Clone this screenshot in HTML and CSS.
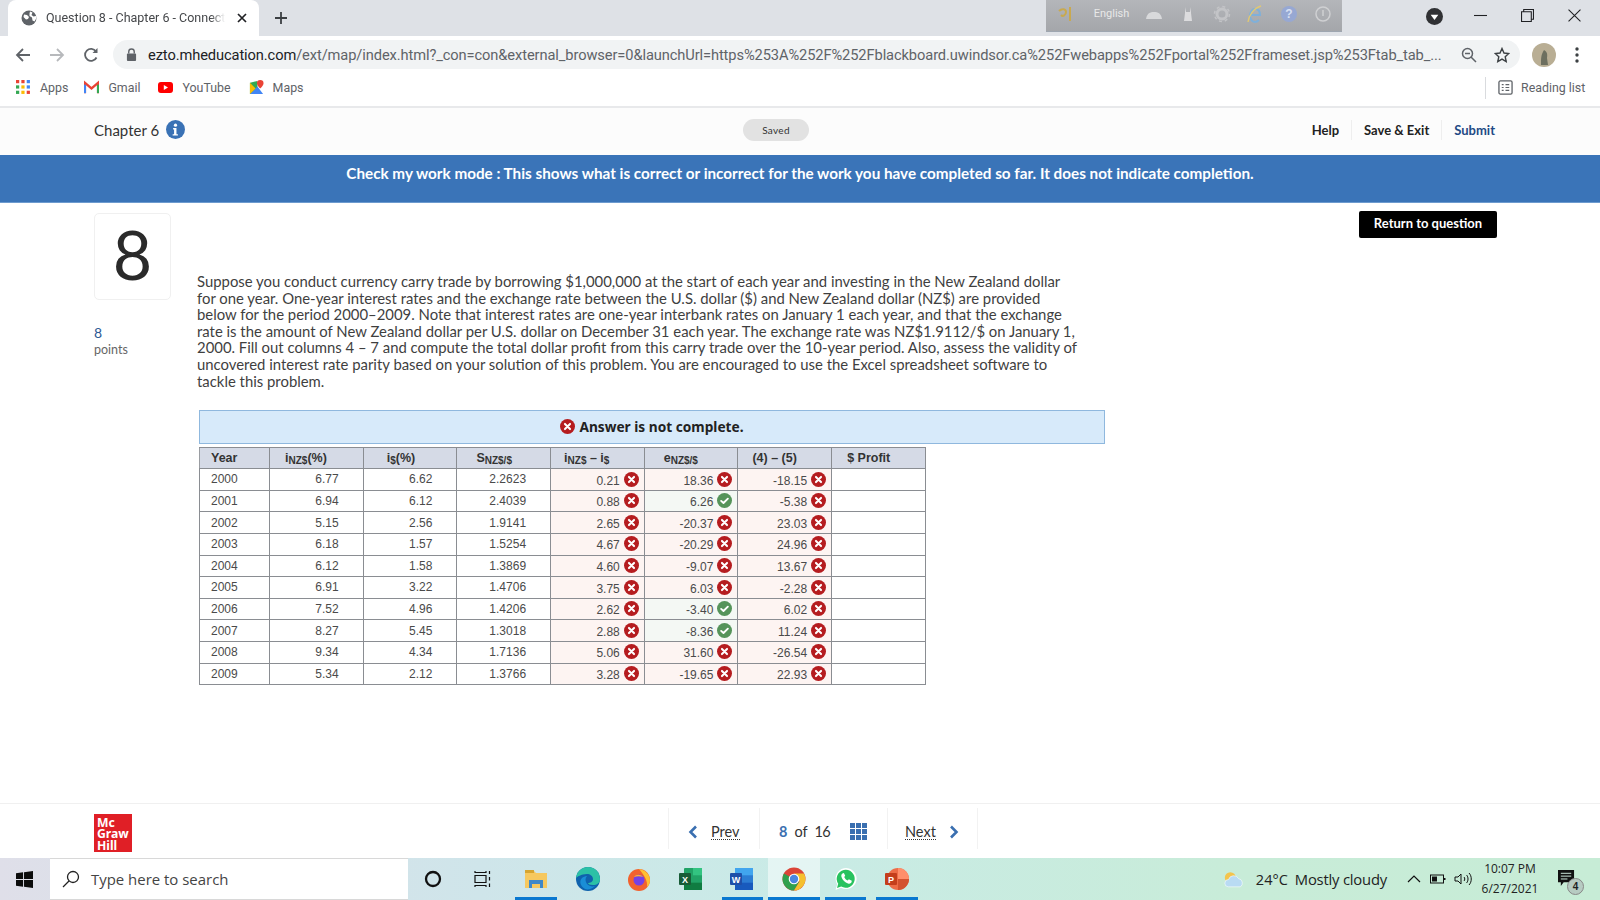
FILE: index.html
```html
<!DOCTYPE html>
<html lang="en">
<head>
<meta charset="utf-8">
<title>Question 8 - Chapter 6 - Connect</title>
<link rel="stylesheet" href="styles.css">
</head>
<body>
<svg class="defs" width="0" height="0" aria-hidden="true">
  <symbol id="bad" viewBox="0 0 16 16"><circle cx="8" cy="8" r="8" fill="#b51c1f"/><path d="M5.3 5.3l5.4 5.4M10.7 5.3l-5.4 5.4" stroke="#fff" stroke-width="2.2" stroke-linecap="round"/></symbol>
  <symbol id="good" viewBox="0 0 16 16"><circle cx="8" cy="8" r="8" fill="#55945a"/><path d="M4.4 8.4l2.5 2.3 4.7-4.7" stroke="#fff" stroke-width="2" fill="none" stroke-linecap="round" stroke-linejoin="round"/></symbol>
</svg>

<div class="tabstrip">
  <div class="tab">
    <svg class="tab-fav" viewBox="0 0 16 16"><circle cx="8" cy="8" r="7.5" fill="#5f6368"/><path d="M3 4.5l3 .5 2 2-1 2-2 .5-2.500-2.500zM9 1.500l2.500 1-1 2.500 2 1.500 2.500-.5.5 2-2 3.500-2-1-.5-3-2.500-1.500 0-2.500z" fill="#fff"/></svg>
    <span class="tab-title">Question 8 - Chapter 6 - Connect</span>
    <svg class="tab-x" viewBox="0 0 10 10"><path d="M1 1l8 8M9 1l-8 8" stroke="#202124" stroke-width="1.700"/></svg>
  </div>
  <svg class="tab-plus" viewBox="0 0 12 12"><path d="M6 0v12M0 6h12" stroke="#3c4043" stroke-width="1.800"/></svg>
  <div class="langbar">
    <svg class="lb-i lb-a" viewBox="0 0 18 18"><path d="M2 6c3-3 7-2 7 1s-3 5-5 3M13 2v14" stroke="#c9a94f" stroke-width="2" fill="none"/></svg>
    <span class="lb-txt">English</span>
    <svg class="lb-i" viewBox="0 0 18 18"><path d="M1 14c1-6 4-7 8-7s7 1 8 7z" fill="#d8d9db"/></svg>
    <svg class="lb-i" viewBox="0 0 18 18"><path d="M6 2l1 5h4l1-5v6l1 8H5l1-8z" fill="#dcdcde"/></svg>
    <svg class="lb-i" viewBox="0 0 18 18"><circle cx="9" cy="9" r="5" fill="none" stroke="#c3c4c7" stroke-width="3"/><circle cx="9" cy="9" r="7.500" fill="none" stroke="#c3c4c7" stroke-width="1.500" stroke-dasharray="3 2.900"/></svg>
    <svg class="lb-i" viewBox="0 0 18 18"><path d="M4 10h10c0-4-2-6-5-6s-5 3-5 7 3 6 5 6 3-1 4-2" fill="none" stroke="#7fb0da" stroke-width="2"/><path d="M2 17C3 10 8 3 15 1" fill="none" stroke="#e0c873" stroke-width="1.400"/></svg>
    <svg class="lb-i" viewBox="0 0 18 18"><circle cx="9" cy="9" r="8" fill="#97a8d3"/><text x="9" y="13" text-anchor="middle" class="lb-q">?</text></svg>
    <svg class="lb-i" viewBox="0 0 18 18"><circle cx="9" cy="9" r="7" fill="none" stroke="#cfd0d2" stroke-width="1.500"/><path d="M9 5v6" stroke="#cfd0d2" stroke-width="1.500"/></svg>
  </div>
  <div class="profile-dot"><svg viewBox="0 0 20 20"><circle cx="10" cy="10" r="10" fill="#303134"/><path d="M5.500 8h9L10 14z" fill="#fff"/></svg></div>
  <div class="winbtns">
    <svg viewBox="0 0 12 12"><path d="M0 6h12" stroke="#202124"/></svg>
    <svg viewBox="0 0 12 12"><path d="M2.500 2.500V.5h9v9h-2M.5 2.500h9v9h-9z" stroke="#202124" fill="none"/></svg>
    <svg viewBox="0 0 12 12"><path d="M.5.5l11 11M11.500.5l-11 11" stroke="#202124"/></svg>
  </div>
</div>

<div class="toolbar">
  <svg class="nav" viewBox="0 0 16 16"><path d="M15 8H2M8 2L2 8l6 6" stroke="#5f6368" stroke-width="1.800" fill="none"/></svg>
  <svg class="nav" viewBox="0 0 16 16"><path d="M1 8h13M8 2l6 6-6 6" stroke="#b7b9bc" stroke-width="1.800" fill="none"/></svg>
  <svg class="nav" viewBox="0 0 16 16"><path d="M13.500 10.500A6 6 0 1 1 13 4.500" stroke="#5f6368" stroke-width="1.800" fill="none"/><path d="M14.500 1v5h-5z" fill="#5f6368"/></svg>
  <div class="omnibox">
    <svg class="lock" viewBox="0 0 12 14"><rect x="1" y="6" width="10" height="8" rx="1" fill="#5f6368"/><path d="M3 6V4a3 3 0 0 1 6 0v2" stroke="#5f6368" stroke-width="1.500" fill="none"/></svg>
    <span class="url"><b>ezto.mheducation.com</b>/ext/map/index.html?_con=con&amp;external_browser=0&amp;launchUrl=https%253A%252F%252Fblackboard.uwindsor.ca%252Fwebapps%252Fportal%252Fframeset.jsp%253Ftab_tab_...</span>
    <svg class="omni-i" viewBox="0 0 16 16"><circle cx="6.500" cy="6.500" r="5" stroke="#5f6368" stroke-width="1.500" fill="none"/><path d="M10 10l5 5M4 6.500h5" stroke="#5f6368" stroke-width="1.500"/></svg>
    <svg class="omni-i" viewBox="0 0 16 16"><path d="M8 1.500l2 4.500 4.800.5-3.600 3.200 1 4.800L8 12.100l-4.200 2.400 1-4.800L1.200 6.500 6 6z" stroke="#3c4043" stroke-width="1.400" fill="none"/></svg>
  </div>
  <svg class="avatar" viewBox="0 0 24 24"><circle cx="12" cy="12" r="12" fill="#b9ae94"/><path d="M9 22c0-7 0-10 3-15 2 1 4 3 3 8l1 7z" fill="#6d6f5f"/></svg>
  <svg class="kebab" viewBox="0 0 4 16"><circle cx="2" cy="2" r="1.700" fill="#3c4043"/><circle cx="2" cy="8" r="1.700" fill="#3c4043"/><circle cx="2" cy="14" r="1.700" fill="#3c4043"/></svg>
</div>

<div class="bookmarks">
  <div class="bm">
    <svg viewBox="0 0 14 14"><g><rect x="0" y="0" width="3" height="3" fill="#ea4335"/><rect x="5" y="0" width="3" height="3" fill="#ea4335"/><rect x="10" y="0" width="3" height="3" fill="#4285f4"/><rect x="0" y="5" width="3" height="3" fill="#34a853"/><rect x="5" y="5" width="3" height="3" fill="#fbbc04"/><rect x="10" y="5" width="3" height="3" fill="#4285f4"/><rect x="0" y="10" width="3" height="3" fill="#34a853"/><rect x="5" y="10" width="3" height="3" fill="#fbbc04"/><rect x="10" y="10" width="3" height="3" fill="#ea4335"/></g></svg>
    <span>Apps</span>
  </div>
  <div class="bm">
    <svg viewBox="0 0 16 12"><path d="M1 12V1l7 6 7-6v11" fill="none" stroke="#ea4335" stroke-width="2.400"/><path d="M1 12V3" stroke="#4285f4" stroke-width="2.400"/><path d="M15 12V3" stroke="#34a853" stroke-width="2.400"/></svg>
    <span>Gmail</span>
  </div>
  <div class="bm">
    <svg viewBox="0 0 18 13"><rect width="18" height="13" rx="3.500" fill="#f00"/><path d="M7 3.500v6l5-3z" fill="#fff"/></svg>
    <span>YouTube</span>
  </div>
  <div class="bm">
    <svg viewBox="0 0 16 16"><path d="M1 3l8-2v14l-8 0z" fill="#34a853"/><path d="M1 15L9 7l6 8z" fill="#4285f4"/><path d="M1 3l6 6-6 6z" fill="#fbbc04"/><path d="M12 0a3.500 3.500 0 0 1 3.500 3.500C15.500 6 12 9 12 9S8.500 6 8.500 3.500A3.500 3.500 0 0 1 12 0z" fill="#ea4335"/></svg>
    <span>Maps</span>
  </div>
  <div class="reading">
    <svg viewBox="0 0 16 16"><rect x="1" y="1" width="14" height="14" rx="1.500" fill="none" stroke="#5f6368" stroke-width="1.400"/><path d="M4 5h2M4 8h2M4 11h2M8 5h4M8 8h4M8 11h4" stroke="#5f6368" stroke-width="1.300"/></svg>
    <span>Reading list</span>
  </div>
</div>

<header class="apphead">
  <div class="chapter">
    <span>Chapter 6</span>
    <svg class="info" viewBox="0 0 20 20"><circle cx="10" cy="10" r="10" fill="#3a72b5"/><circle cx="10" cy="5.500" r="1.700" fill="#fff"/><path d="M7.500 8.500h3.500v6.500h1.500v1.300h-5.500V15h1.500v-5H7.500z" fill="#fff"/></svg>
  </div>
  <div class="saved">Saved</div>
  <nav class="headlinks">
    <a class="hl">Help</a>
    <a class="hl hl-sep">Save &amp; Exit</a>
    <a class="hl hl-sep hl-submit">Submit</a>
  </nav>
</header>

<div class="banner">Check my work mode : This shows what is correct or incorrect for the work you have completed so far. It does not indicate completion.</div>

<main class="main">
  <aside class="side">
    <div class="qnum">8</div>
    <div class="pts">8</div>
    <div class="ptslabel">points</div>
  </aside>
  <section class="content">
    <p class="question">Suppose you conduct currency carry trade by borrowing $1,000,000 at the start of each year and investing in the New Zealand dollar<br>for one year. One-year interest rates and the exchange rate between the U.S. dollar ($) and New Zealand dollar (NZ$) are provided<br>below for the period 2000–2009. Note that interest rates are one-year interbank rates on January 1 each year, and that the exchange<br>rate is the amount of New Zealand dollar per U.S. dollar on December 31 each year. The exchange rate was NZ$1.9112/$ on January 1,<br>2000. Fill out columns 4 – 7 and compute the total dollar profit from this carry trade over the 10-year period. Also, assess the validity of<br>uncovered interest rate parity based on your solution of this problem. You are encouraged to use the Excel spreadsheet software to<br>tackle this problem.</p>
    <div class="notice"><svg class="st st-lg"><use href="#bad"/></svg><span>Answer is not complete.</span></div>
    <table class="grid">
      <colgroup><col class="c1"><col class="c2"><col class="c2"><col class="c2"><col class="c2"><col class="c2"><col class="c2"><col class="c2"></colgroup>
      <thead>
        <tr>
          <th class="p-year">Year</th>
          <th class="p-a">i<sub>NZ$</sub>(%)</th>
          <th class="p-b">i<sub>$</sub>(%)</th>
          <th class="p-c">S<sub>NZ$/$</sub></th>
          <th class="p-d">i<sub>NZ$</sub> – i<sub>$</sub></th>
          <th class="p-c">e<sub>NZ$/$</sub></th>
          <th class="p-e">(4) – (5)</th>
          <th class="p-f">$ Profit</th>
        </tr>
      </thead>
      <tbody>
        <tr><td class="yr">2000</td><td>6.77</td><td>6.62</td><td>2.2623</td><td class="bad">0.21<svg class="st"><use href="#bad"/></svg></td><td class="bad">18.36<svg class="st"><use href="#bad"/></svg></td><td class="bad">-18.15<svg class="st"><use href="#bad"/></svg></td><td></td></tr>
        <tr><td class="yr">2001</td><td>6.94</td><td>6.12</td><td>2.4039</td><td class="bad">0.88<svg class="st"><use href="#bad"/></svg></td><td class="good">6.26<svg class="st"><use href="#good"/></svg></td><td class="bad">-5.38<svg class="st"><use href="#bad"/></svg></td><td></td></tr>
        <tr><td class="yr">2002</td><td>5.15</td><td>2.56</td><td>1.9141</td><td class="bad">2.65<svg class="st"><use href="#bad"/></svg></td><td class="bad">-20.37<svg class="st"><use href="#bad"/></svg></td><td class="bad">23.03<svg class="st"><use href="#bad"/></svg></td><td></td></tr>
        <tr><td class="yr">2003</td><td>6.18</td><td>1.57</td><td>1.5254</td><td class="bad">4.67<svg class="st"><use href="#bad"/></svg></td><td class="bad">-20.29<svg class="st"><use href="#bad"/></svg></td><td class="bad">24.96<svg class="st"><use href="#bad"/></svg></td><td></td></tr>
        <tr><td class="yr">2004</td><td>6.12</td><td>1.58</td><td>1.3869</td><td class="bad">4.60<svg class="st"><use href="#bad"/></svg></td><td class="bad">-9.07<svg class="st"><use href="#bad"/></svg></td><td class="bad">13.67<svg class="st"><use href="#bad"/></svg></td><td></td></tr>
        <tr><td class="yr">2005</td><td>6.91</td><td>3.22</td><td>1.4706</td><td class="bad">3.75<svg class="st"><use href="#bad"/></svg></td><td class="bad">6.03<svg class="st"><use href="#bad"/></svg></td><td class="bad">-2.28<svg class="st"><use href="#bad"/></svg></td><td></td></tr>
        <tr><td class="yr">2006</td><td>7.52</td><td>4.96</td><td>1.4206</td><td class="bad">2.62<svg class="st"><use href="#bad"/></svg></td><td class="good">-3.40<svg class="st"><use href="#good"/></svg></td><td class="bad">6.02<svg class="st"><use href="#bad"/></svg></td><td></td></tr>
        <tr><td class="yr">2007</td><td>8.27</td><td>5.45</td><td>1.3018</td><td class="bad">2.88<svg class="st"><use href="#bad"/></svg></td><td class="good">-8.36<svg class="st"><use href="#good"/></svg></td><td class="bad">11.24<svg class="st"><use href="#bad"/></svg></td><td></td></tr>
        <tr><td class="yr">2008</td><td>9.34</td><td>4.34</td><td>1.7136</td><td class="bad">5.06<svg class="st"><use href="#bad"/></svg></td><td class="bad">31.60<svg class="st"><use href="#bad"/></svg></td><td class="bad">-26.54<svg class="st"><use href="#bad"/></svg></td><td></td></tr>
        <tr><td class="yr">2009</td><td>5.34</td><td>2.12</td><td>1.3766</td><td class="bad">3.28<svg class="st"><use href="#bad"/></svg></td><td class="bad">-19.65<svg class="st"><use href="#bad"/></svg></td><td class="bad">22.93<svg class="st"><use href="#bad"/></svg></td><td></td></tr>
      </tbody>
    </table>
  </section>
  <div class="return-wrap"><button class="return">Return to question</button></div>
</main>

<footer class="appfoot">
  <div class="logo">Mc<br>Graw<br>Hill</div>
  <div class="pager">
    <div class="pg pg-prev">
      <svg class="chev" viewBox="0 0 10 14"><path d="M8 1.500L2.500 7 8 12.500" stroke="#3a6fb0" stroke-width="2.600" fill="none"/></svg>
      <span class="pglink">Prev</span>
    </div>
    <div class="pg pg-mid">
      <b class="cur">8</b><span class="of">of</span><span class="total">16</span>
      <svg class="gridi" viewBox="0 0 17 17"><g fill="#3a6fb0"><rect width="5" height="5"/><rect x="6" width="5" height="5"/><rect x="12" width="5" height="5"/><rect y="6" width="5" height="5"/><rect x="6" y="6" width="5" height="5"/><rect x="12" y="6" width="5" height="5"/><rect y="12" width="5" height="5"/><rect x="6" y="12" width="5" height="5"/><rect x="12" y="12" width="5" height="5"/></g></svg>
    </div>
    <div class="pg pg-next">
      <span class="pglink">Next</span>
      <svg class="chev" viewBox="0 0 10 14"><path d="M2 1.500L7.500 7 2 12.500" stroke="#3a6fb0" stroke-width="2.600" fill="none"/></svg>
    </div>
  </div>
</footer>

<div class="taskbar">
  <div class="start"><svg viewBox="0 0 18 18"><path d="M0 2.500L7.500 1.400V8.500H0zM8.500 1.300L18 0V8.500H8.500zM0 9.500h7.500v7.100L0 15.500zM8.500 9.500H18V18L8.500 16.700z" fill="#0b0b0b"/></svg></div>
  <div class="search">
    <svg viewBox="0 0 18 18"><circle cx="11" cy="7" r="5.500" fill="none" stroke="#222" stroke-width="1.300"/><path d="M7 11l-6 6" stroke="#222" stroke-width="1.300"/></svg>
    <span>Type here to search</span>
  </div>
  <div class="tb-apps">
    <div class="tb"><svg viewBox="0 0 18 18"><circle cx="9" cy="9" r="7" fill="none" stroke="#111" stroke-width="2.300"/></svg></div>
    <div class="tb tb-view"><svg viewBox="0 0 18 18"><path d="M1 1v1.500h11V1M1 5.500h11v7H1zM1 17v-1.500h11V17M15.500 1v3M15.500 7v3.500M15.500 13.500V17" stroke="#111" stroke-width="1.200" fill="none"/></svg></div>
    <div class="tb on"><svg viewBox="0 0 24 24"><path d="M1 4h9l2 2h11v15H1z" fill="#f6c85f"/><rect x="1" y="3" width="9" height="3" fill="#d7a530"/><path d="M5 21v-8h14v8h-3v-4H8v4z" fill="#3f88c8"/></svg></div>
    <div class="tb"><svg viewBox="0 0 24 24"><circle cx="12" cy="12" r="12" fill="#0f62ad"/><path d="M0 11C1 4 6 0 12 0c7 0 12 5 12 12 0 4-3 6-7 6-3 0-5-1-5-2 2 0 5-1 5-4 0-3-3-5-6-5-6 0-10 3-11 4z" fill="#2cc1a6"/><path d="M9 22c-5-3-6-8-3-11 1-1 3-2 5-2-2 2-2 5 0 8 2 2 5 3 8 2-3 3-7 4-10 3z" fill="#1a8ed6"/></svg></div>
    <div class="tb"><svg viewBox="0 0 24 24"><circle cx="12" cy="13" r="11" fill="#f2622e"/><path d="M12 2c6 1 11 5 11 11 0 3-1 5-3 7 1-6-3-12-8-18z" fill="#ffc131"/><circle cx="12" cy="13" r="5.500" fill="#7542e5"/><path d="M7 10c2-3 7-3 9 0-3-1-6-1-9 0z" fill="#ffb02e"/></svg></div>
    <div class="tb"><svg viewBox="0 0 24 24"><rect x="5" y="1" width="18" height="22" rx="1" fill="#21a366"/><rect x="14" y="1" width="9" height="7.300" fill="#33c481"/><rect x="5" y="15.700" width="18" height="7.300" fill="#107c41"/><rect x="0" y="6" width="12" height="12" rx="1" fill="#185c37"/><text x="6" y="15.500" text-anchor="middle" class="app-l">X</text></svg></div>
    <div class="tb on"><svg viewBox="0 0 24 24"><rect x="5" y="1" width="18" height="22" rx="1" fill="#2b7cd3"/><rect x="5" y="1" width="18" height="7.300" fill="#41a5ee"/><rect x="5" y="15.700" width="18" height="7.300" fill="#185abd"/><rect x="0" y="6" width="12" height="12" rx="1" fill="#1e4fa8"/><text x="6" y="15.500" text-anchor="middle" class="app-l">W</text></svg></div>
    <div class="tb on active"><svg viewBox="0 0 24 24"><circle cx="12" cy="12" r="11.500" fill="#db4437"/><path d="M12 12L1.900 6.500A11.500 11.500 0 0 0 12 23.500l5-8.500z" fill="#2fa04d"/><path d="M12 6.500h10A11.500 11.500 0 0 1 12 23.500l5.500-9z" fill="#f5c02e"/><circle cx="12" cy="12" r="5.300" fill="#fff"/><circle cx="12" cy="12" r="4.200" fill="#4a86e0"/></svg></div>
    <div class="tb on"><svg viewBox="0 0 24 24"><path d="M1.500 23l1.700-5.800A10.500 10.500 0 1 1 7 20.800z" fill="#fff"/><path d="M3 21l1.200-4.200A9 9 0 1 1 7.200 19.600z" fill="#28c25f"/><path d="M8.500 6.500c-1 .5-1.500 2-1 3.500 1 3 3.500 5.500 6.500 6.500 1.500.5 3 0 3.500-1.200l.3-1.500-3-1.500-1 1.200c-1.500-.5-3-2-3.600-3.500l1-1.200-1.300-2.700z" fill="#fff"/></svg></div>
    <div class="tb on"><svg viewBox="0 0 24 24"><circle cx="13" cy="12" r="11" fill="#ed6c47"/><path d="M13 1a11 11 0 0 1 11 11H13z" fill="#ff8f6b"/><path d="M13 12h11a11 11 0 0 1-11 11z" fill="#d35230"/><rect x="0" y="6" width="12" height="12" rx="1" fill="#c43e1c"/><text x="6" y="15.500" text-anchor="middle" class="app-l">P</text></svg></div>
  </div>
  <div class="tray">
    <svg class="weather" viewBox="0 0 24 18"><circle cx="8" cy="7" r="6" fill="#f3c44d"/><path d="M6 17a4 4 0 0 1 0-8 6 6 0 0 1 11-1 5 5 0 0 1 2 9z" fill="#b9dbf3" stroke="#fff" stroke-width=".6"/></svg>
    <span class="temp">24°C</span>
    <span class="cond">Mostly cloudy</span>
    <svg class="tray-chev" viewBox="0 0 14 8"><path d="M1 7l6-6 6 6" stroke="#111" stroke-width="1.200" fill="none"/></svg>
    <svg class="tray-bat" viewBox="0 0 16 10"><rect x=".5" y="1" width="13" height="8" fill="none" stroke="#111"/><rect x="2" y="2.500" width="5" height="5" fill="#111"/><rect x="14" y="4" width="1.500" height="2" fill="#111"/></svg>
    <svg class="tray-vol" viewBox="0 0 18 14"><path d="M1 5h3l3-3v10L4 9H1z" fill="none" stroke="#111"/><path d="M10 5c1 1 1 3 0 4M12.500 3c2 2 2 6 0 8M15 1c3 3 3 9 0 12" fill="none" stroke="#111"/></svg>
    <div class="clock"><span>10:07 PM</span><span>6/27/2021</span></div>
    <div class="notif">
      <svg viewBox="0 0 18 18"><path d="M0 0h17v13H6l-3 4v-4H0z" fill="#111"/><path d="M3 3.500h11M3 6.500h11M3 9.500h7" stroke="#d4efe3"/></svg>
      <span class="badge">4</span>
    </div>
  </div>
</div>
</body>
</html>
```

FILE: styles.css
```css
* { box-sizing: border-box; }
html, body { margin: 0; height: 100%; }
body {
  width: 1600px; height: 900px; overflow: hidden;
  display: flex; flex-direction: column;
  font-family: "Noto Sans", "Liberation Sans", sans-serif;
  background: #fff; color: #333;
}
.defs { position: absolute; }

/* browser chrome */
.tabstrip { height: 36px; flex: none; background: #dee1e6; display: flex; align-items: flex-start; padding-left: 8px; }
.tab { width: 251px; height: 36px; background: #fff; border-radius: 8px 8px 0 0; display: flex; align-items: center; padding: 0 0 0 13px; overflow: hidden; flex: none; }
.tab-fav { width: 16px; height: 16px; flex: none; }
.tab-title { margin-left: 9px; width: 179px; flex: none; font-size: 12.5px; color: #45474a; white-space: nowrap; overflow: hidden; padding-bottom: 2px; -webkit-mask-image: linear-gradient(90deg, #000 92%, transparent); mask-image: linear-gradient(90deg, #000 92%, transparent); font-family: "Roboto", sans-serif; }
.tab-x { width: 10px; height: 10px; margin-left: 12px; flex: none; }
.tab-plus { width: 12px; height: 12px; margin: 12px 0 0 16px; flex: none; }
.langbar { margin-left: 759px; width: 296px; height: 32px; background: linear-gradient(#b4b6ba, #a4a6aa); border-bottom: 1px solid #9ea6b0; display: flex; align-items: center; padding: 0 10px 4px 11px; justify-content: space-between; flex: none; }
.lb-i { width: 18px; height: 18px; flex: none; }
.lb-txt { font-size: 11px; color: #e8e8e8; font-family: "Roboto", sans-serif; margin-left: 3px; }
.lb-q { font: bold 12px "Liberation Sans", sans-serif; fill: #d9e0f2; }
.profile-dot { margin: 8px 0 0 84px; width: 17px; height: 17px; flex: none; }
.profile-dot svg { display: block; width: 17px; height: 17px; }
.winbtns { margin: 9px 0 0 31px; display: flex; gap: 34px; flex: none; }
.winbtns svg { width: 13px; height: 13px; flex: none; }

.toolbar { height: 35px; flex: none; display: flex; align-items: center; padding: 2px 0 0 15px; background: #fff; }
.nav { width: 16px; height: 16px; margin-right: 18px; flex: none; }
.omnibox { width: 1407px; height: 29px; margin-left: -4px; border-radius: 15px; background: #f1f3f4; display: flex; align-items: center; padding-left: 13px; flex: none; }
.lock { width: 11px; height: 13px; flex: none; }
.url { margin-left: 11px; width: 1296px; flex: none; white-space: nowrap; overflow: hidden; font-family: "Roboto", sans-serif; font-size: 14.66px; color: #5f6368; letter-spacing: -.1px; }
.url b { font-weight: 400; color: #202124; }
.omni-i { width: 16px; height: 16px; margin-left: 17px; flex: none; }
.avatar { width: 24px; height: 24px; margin-left: 12px; flex: none; }
.kebab { width: 4px; height: 16px; margin-left: 19px; flex: none; }

.bookmarks { height: 37px; flex: none; border-bottom: 2px solid #e8e9eb; display: flex; align-items: center; padding: 0 0 2px 16px; background: #fff; font-family: "Roboto", sans-serif; font-size: 12.4px; color: #5f6368; }
.bm { display: flex; align-items: center; gap: 9px; margin-right: 18px; }
.bm:first-child { margin-right: 16px; }
.bm svg { width: 15px; height: 15px; flex: none; }
.reading { margin-left: auto; display: flex; align-items: center; width: 115px; height: 22px; border-left: 1px solid #d9dbde; padding-left: 12px; gap: 8px; }
.reading svg { width: 15px; height: 15px; }

/* app */
.apphead { height: 47px; flex: none; background: #fcfcfc; display: flex; align-items: center; padding: 0 105px 4px 94px; font-family: "Lato", sans-serif; }
.chapter { display: flex; align-items: center; gap: 7px; font-size: 15px; color: #333; width: 649px; flex: none; }
.info { width: 19px; height: 19px; }
.saved { width: 66px; height: 22px; border-radius: 11px; background: #e2e2e2; font-size: 10px; color: #333; display: flex; align-items: center; justify-content: center; letter-spacing: .3px; }
.headlinks { margin-left: auto; display: flex; align-items: center; font-size: 13px; font-weight: 700; color: #222; }
.hl-sep { margin-left: 12px; padding-left: 12px; border-left: 1px solid #eee; line-height: 20px; }
.hl-submit { color: #1f4a85; }

.banner { height: 48px; flex: none; background: #3a74b8; border-bottom: 1px solid #6d9bcf; color: #fff; font-family: "Lato", sans-serif; font-weight: 700; font-size: 15.25px; display: flex; align-items: center; justify-content: center; padding-bottom: 11px; }

.main { height: 600px; flex: none; display: flex; align-items: flex-start; padding-left: 94px; font-family: "Lato", sans-serif; }
.side { width: 77px; flex: none; padding-top: 10px; }
.qnum { height: 87px; border: 1px solid #f0f0f0; border-radius: 5px; font-size: 68px; font-weight: 400; color: #2a2a2a; display: flex; align-items: center; justify-content: center; line-height: 1; padding-bottom: 5px; }
.pts { margin-top: 24px; font-size: 14px; line-height: 17px; color: #2d5a94; }
.ptslabel { font-size: 12.5px; line-height: 17px; color: #666; }
.content { margin-left: 26px; width: 920px; flex: none; padding-top: 70px; }
.question { margin: 0; font-size: 14.88px; line-height: 16.6px; color: #3f3f3f; white-space: nowrap; }
.notice { margin: 21px 0 0 2px; width: 906px; height: 34px; background: #d7eafa; border: 1px solid #8fb8de; display: flex; align-items: center; justify-content: center; gap: 4px; font-family: "Noto Sans", sans-serif; font-weight: 700; font-size: 13.7px; color: #222; padding: 0 0 1px; }
.grid { margin: 3px 0 0 2px; width: 726px; border-collapse: collapse; table-layout: fixed; font-family: "Liberation Sans", sans-serif; font-size: 12px; color: #4a4a4a; }
.c1 { width: 70px; }
.c2 { width: 93.7px; }
.grid th { height: 21px; background: #d5dae6; border: 1px solid #8a8d92; border-left-color: #9a9da2; text-align: left; font-size: 12.5px; font-weight: 700; color: #333; padding: 0; white-space: nowrap; }
.grid sub { font-size: 10px; line-height: 0; vertical-align: -2px; }
.grid th.p-year { padding-left: 11px; }
.grid th.p-a { padding-left: 15px; }
.grid th.p-b { padding-left: 23px; }
.grid th.p-c { padding-left: 19px; }
.grid th.p-d { padding-left: 13px; }
.grid th.p-e { padding-left: 14px; }
.grid th.p-f { padding-left: 15px; }
.grid td { height: 21.6px; border: 1px solid #8a8d92; text-align: right; padding: 0 24px 0 0; white-space: nowrap; }
.grid td.yr { text-align: left; padding: 0 0 0 11px; }
.grid td.bad, .grid td.good { padding-right: 5px; }
.grid td.bad { background: #fdf4f2; }
.grid td.good { background: #f4f8f4; }
.st { width: 15px; height: 15px; margin-left: 4px; vertical-align: -2.5px; }
.st-lg { width: 15px; height: 15px; margin: 0; }

.return-wrap { margin: 8px 0 0 242px; flex: none; }
.return { display: block; width: 138px; height: 27px; background: #000; color: #fff; border: 0; border-radius: 2px; font-family: "Lato", sans-serif; font-weight: 700; font-size: 13px; padding: 0 0 3px; }

.appfoot { height: 55px; flex: none; border-top: 1px solid #f0f0f0; display: flex; align-items: flex-start; padding-left: 94px; font-family: "Lato", sans-serif; }
.logo { width: 38px; height: 38px; margin-top: 10px; background: #e01f26; color: #fff; font-family: "Noto Sans", sans-serif; font-weight: 700; font-size: 12.2px; line-height: 11.3px; padding: 3px 0 0 3px; flex: none; }
.pager { margin: 4px 0 0 536px; display: flex; height: 41px; font-size: 14.5px; color: #333; }
.pg { display: flex; align-items: center; border-left: 1px solid #f2f2f2; padding-top: 6px; }
.pg-prev { width: 91px; padding-left: 19px; gap: 13px; }
.pg-mid { width: 128px; padding-left: 19px; }
.pg-next { width: 91px; padding-left: 17px; border-right: 1px solid #f2f2f2; gap: 13px; }
.chev { width: 10px; height: 14px; flex: none; }
.pglink { border-bottom: 1px dotted #333; line-height: 15px; }
.cur { color: #3a6fb0; }
.of { margin: 0 7px; }
.total { letter-spacing: -.8px; }
.gridi { width: 17px; height: 17px; margin-left: 20px; flex: none; }

/* taskbar */
.taskbar { height: 42px; flex: none; display: flex; align-items: stretch; background: linear-gradient(90deg, #dfdfe9 0%, #cfe5ea 30%, #c9ebe6 50%, #c8ecd8 78%, #c7ecd6 100%); }
.start { width: 50px; flex: none; display: flex; align-items: center; justify-content: center; }
.start svg { width: 17px; height: 17px; margin-right: 1px; }
.search { width: 358px; flex: none; background: #fff; border: 1px solid #d8d8d8; border-width: 1px 0; display: flex; align-items: center; padding-left: 12px; gap: 11px; font-family: "Open Sans", sans-serif; font-size: 14.95px; color: #444; }
.search svg { width: 18px; height: 18px; flex: none; }
.tb-apps { display: flex; margin-left: -1px; }
.tb { width: 51.6px; flex: none; display: flex; align-items: center; justify-content: center; position: relative; }
.tb svg { width: 24px; height: 24px; }
.tb:nth-child(-n+2) svg { width: 18px; height: 18px; }
.tb-view { padding-right: 2px; }
.tb.on::after { content: ""; position: absolute; left: 5px; right: 5px; bottom: 0; height: 3px; background: #0a78d0; }
.tb.active::after { left: 0; right: 0; }
.tb.active { background: rgba(255,255,255,.5); }
.app-l { font: bold 9px "Liberation Sans", sans-serif; fill: #fff; }
.tray { margin-left: auto; display: flex; align-items: center; font-family: "Open Sans", sans-serif; color: #222; padding-right: 17px; }
.weather { width: 22px; height: 17px; margin-right: 11px; flex: none; }
.temp { font-size: 14.5px; margin-right: 7px; }
.cond { font-size: 14.8px; margin-right: 20px; letter-spacing: -.2px; }
.tray-chev { width: 14px; height: 8px; margin-right: 9px; }
.tray-bat { width: 16px; height: 10px; margin-right: 8px; }
.tray-vol { width: 18px; height: 14px; margin-right: 8px; }
.clock { display: flex; flex-direction: column; align-items: center; width: 60px; font-size: 12px; line-height: 20px; margin-right: 18px; }
.notif { position: relative; width: 19px; height: 18px; margin-right: 6px; }
.notif svg { display: block; width: 17px; height: 17px; }
.badge { position: absolute; right: -7px; bottom: -7px; width: 17px; height: 17px; border-radius: 50%; background: #b7cbc2; border: 1px solid #888; font-size: 10px; font-weight: 700; line-height: 15px; text-align: center; font-family: "Liberation Sans", sans-serif; }
```
